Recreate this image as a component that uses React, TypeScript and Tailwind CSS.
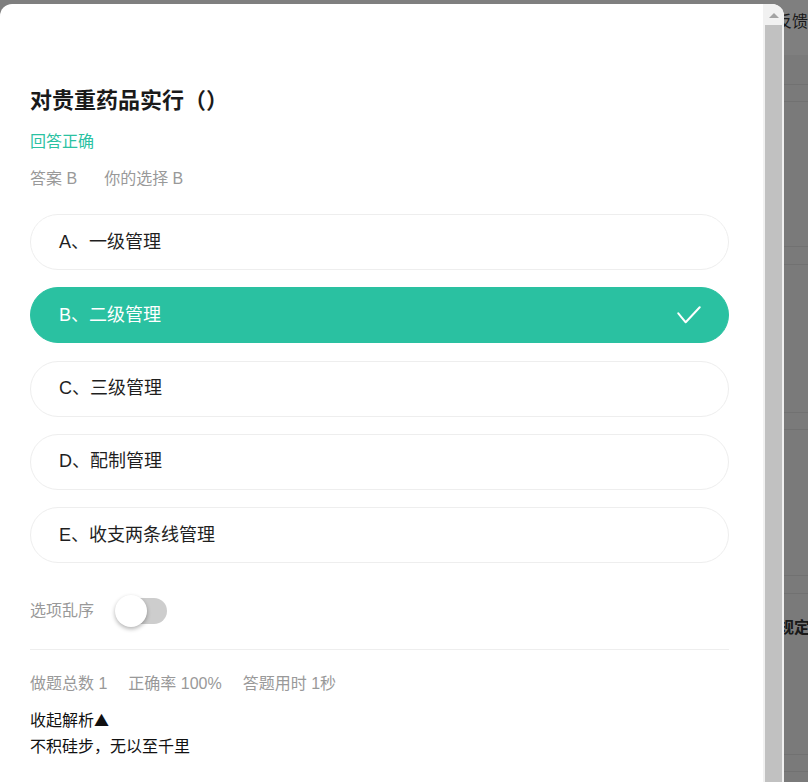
import React from "react";

const options = [
  { key: "A", text: "一级管理" },
  { key: "B", text: "二级管理", selected: true },
  { key: "C", text: "三级管理" },
  { key: "D", text: "配制管理" },
  { key: "E", text: "收支两条线管理" },
];

function BackgroundPage() {
  return (
    <div className="flex flex-col w-full h-full bg-[#f4f4f4]">
      <div className="h-[55px] bg-white flex items-start pt-[10px] shrink-0">
        <span className="ml-[776px] text-[16px] leading-[24px] text-[#333] whitespace-nowrap">反馈</span>
      </div>
      <div className="h-[30px] border-b border-[#e2e2e2] shrink-0" />
      <div className="h-[17px] border-b border-[#e2e2e2] shrink-0" />
      <div className="h-[145px] border-b border-[#e2e2e2] shrink-0" />
      <div className="h-[18px] border-b border-[#e2e2e2] shrink-0" />
      <div className="h-[148px] border-b border-[#e2e2e2] shrink-0" />
      <div className="h-[17px] border-b border-[#e2e2e2] shrink-0" />
      <div className="h-[146px] border-b border-[#e2e2e2] shrink-0" />
      <div className="h-[18px] border-b border-[#e2e2e2] shrink-0" />
      <div className="h-[161px] border-b border-[#e2e2e2] shrink-0 pt-[22px]">
        <span className="ml-[778px] text-[16px] leading-[24px] font-bold text-[#333] whitespace-nowrap">规定</span>
      </div>
      <div className="h-[17px] border-b border-[#e2e2e2] shrink-0" />
    </div>
  );
}

function Toggle() {
  return (
    <div className="relative w-[52px] h-[32px]">
      <div className="absolute left-[2px] top-[3px] w-[50px] h-[26px] rounded-full bg-[#cdcdcd]" />
      <div className="absolute left-0 top-0 w-[32px] h-[32px] rounded-full bg-white shadow-[0_2px_4px_rgba(0,0,0,0.3)]" />
    </div>
  );
}

export default function App() {
  return (
    <div className="relative w-[808px] h-[782px] overflow-hidden font-['Liberation_Sans','Noto_Sans_CJK_SC',sans-serif]">
      <BackgroundPage />
      <div className="absolute inset-0 bg-black/50" />
      <div className="absolute left-0 top-[4px] w-[784px] h-[778px] bg-white rounded-t-[12px] overflow-hidden flex">
        <div className="flex-1 pl-[30px] pt-[82px]">
          <div className="w-[699px] flex flex-col">
            <h1 className="text-[22px] leading-[30px] font-bold text-[#1a1a1a]">对贵重药品实行（）</h1>
            <div className="mt-[14px] text-[16px] leading-[24px] text-[#2bc2a2]">回答正确</div>
            <div className="mt-[13px] text-[16px] leading-[24px] text-[#999] flex">
              <span>答案 B</span>
              <span className="ml-[27px]">你的选择 B</span>
            </div>
            <div className="mt-[23px] flex flex-col gap-[17.25px]">
              {options.map((o) =>
                o.selected ? (
                  <div
                    key={o.key}
                    className="h-[56px] rounded-full bg-[#2ac1a1] border border-[#2ac1a1] flex items-center justify-between pl-[28px] pr-[27px] text-[18px] text-white"
                  >
                    <span>
                      {o.key}、{o.text}
                    </span>
                    <svg width="24" height="18" viewBox="0 0 24 18" fill="none">
                      <path d="M1.3 7.3 L8.7 16.3 L22.7 1.3" stroke="white" strokeWidth="2" strokeLinecap="round" strokeLinejoin="round" />
                    </svg>
                  </div>
                ) : (
                  <div
                    key={o.key}
                    className="h-[56px] rounded-full border border-[#eeeeee] flex items-center pl-[28px] text-[18px] text-[#1f1f1f]"
                  >
                    {o.key}、{o.text}
                  </div>
                )
              )}
            </div>
            <div className="mt-[32px] flex items-center h-[32px]">
              <span className="text-[16px] leading-[24px] text-[#999]">选项乱序</span>
              <div className="ml-[21px]">
                <Toggle />
              </div>
            </div>
            <div className="mt-[22px] h-px bg-[#eeeeee]" />
            <div className="mt-[21px] flex gap-[21px] text-[16px] leading-[26px] text-[#999]">
              <span>做题总数 1</span>
              <span>正确率 100%</span>
              <span>答题用时 1秒</span>
            </div>
            <div className="mt-[10px] text-[16px] leading-[26px] text-[#111]">
              收起解析<span className="font-['Noto_Sans_CJK_SC',sans-serif] text-[15px]">▲</span>
            </div>
            <div className="text-[16px] leading-[26px] text-[#111]">不积硅步，无以至千里</div>
          </div>
        </div>
        <div className="w-[21px] bg-[#f1f1f1] flex flex-col items-center shrink-0">
          <div className="h-[21px] flex items-start justify-center pt-[9px]">
            <svg width="10" height="5" viewBox="0 0 10 5">
              <path d="M0 5 L5 0 L10 5 Z" fill="#a3a3a3" />
            </svg>
          </div>
          <div className="flex-1 w-[17px] bg-[#c1c1c1]" />
        </div>
      </div>
    </div>
  );
}
